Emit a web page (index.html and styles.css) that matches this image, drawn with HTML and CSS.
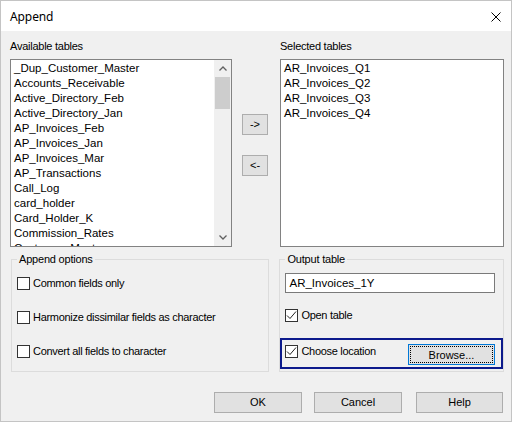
FILE: index.html
```html
<!DOCTYPE html>
<html>
<head>
<meta charset="utf-8">
<link rel="stylesheet" href="styles.css">
</head>
<body>
<div class="window">
  <div class="titlebar">
    <span class="title">Append</span>
    <svg class="close" width="10" height="10" viewBox="0 0 10 10"><path d="M0.5 0.5 L9.5 9.5 M9.5 0.5 L0.5 9.5" stroke="#000" stroke-width="1" fill="none"/></svg>
  </div>
  <div class="content">
    <div class="toprow">
      <div class="col-left">
        <div class="label">Available tables</div>
        <div class="listbox">
          <div class="items">
            <div class="item">_Dup_Customer_Master</div>
            <div class="item">Accounts_Receivable</div>
            <div class="item">Active_Directory_Feb</div>
            <div class="item">Active_Directory_Jan</div>
            <div class="item">AP_Invoices_Feb</div>
            <div class="item">AP_Invoices_Jan</div>
            <div class="item">AP_Invoices_Mar</div>
            <div class="item">AP_Transactions</div>
            <div class="item">Call_Log</div>
            <div class="item">card_holder</div>
            <div class="item">Card_Holder_K</div>
            <div class="item">Commission_Rates</div>
            <div class="item">Customer_Master</div>
          </div>
          <div class="scrollbar">
            <div class="arrow">
              <svg width="8" height="5" viewBox="0 0 8 5"><path d="M0.5 4.5 L4 1 L7.5 4.5" stroke="#606060" stroke-width="1.3" fill="none"/></svg>
            </div>
            <div class="track"><div class="thumb"></div></div>
            <div class="arrow">
              <svg width="8" height="5" viewBox="0 0 8 5"><path d="M0.5 0.5 L4 4 L7.5 0.5" stroke="#606060" stroke-width="1.3" fill="none"/></svg>
            </div>
          </div>
        </div>
      </div>
      <div class="col-mid">
        <button class="btn small">-&gt;</button>
        <button class="btn small">&lt;-</button>
      </div>
      <div class="col-right">
        <div class="label">Selected tables</div>
        <div class="listbox">
          <div class="items">
            <div class="item">AR_Invoices_Q1</div>
            <div class="item">AR_Invoices_Q2</div>
            <div class="item">AR_Invoices_Q3</div>
            <div class="item">AR_Invoices_Q4</div>
          </div>
        </div>
      </div>
    </div>
    <div class="grouprow">
      <fieldset class="group group-left">
        <legend>Append options</legend>
        <div class="checks">
          <label class="check"><span class="box"></span><span>Common fields only</span></label>
          <label class="check"><span class="box"></span><span>Harmonize dissimilar fields as character</span></label>
          <label class="check"><span class="box"></span><span>Convert all fields to character</span></label>
        </div>
      </fieldset>
      <fieldset class="group group-right">
        <legend>Output table</legend>
        <div class="textbox">AR_Invoices_1Y</div>
        <label class="check open"><span class="box"><svg width="11" height="11" viewBox="0 0 11 11"><path d="M1 5.5 L4 8.5 L10 1.5" stroke="#222" stroke-width="1" fill="none"/></svg></span><span>Open table</span></label>
        <div class="focusrect">
          <label class="check loc"><span class="box"><svg width="11" height="11" viewBox="0 0 11 11"><path d="M1 5.5 L4 8.5 L10 1.5" stroke="#222" stroke-width="1" fill="none"/></svg></span><span>Choose location</span></label>
          <button class="btn browse"><span class="dotted">Browse...</span></button>
        </div>
      </fieldset>
    </div>
    <div class="buttons">
      <button class="btn big ok">OK</button>
      <button class="btn big cancel">Cancel</button>
      <button class="btn big help">Help</button>
    </div>
  </div>
</div>
</body>
</html>
```

FILE: styles.css
```css
* { box-sizing: border-box; }
html, body { margin: 0; padding: 0; }
body {
  background: #f0f0f0;
  font-family: "Liberation Sans", Arial, sans-serif;
  font-size: 11px;
  color: #000;
}
.window {
  width: 512px;
  height: 422px;
  border: 1px solid #c4c4c4;
  background: #f0f0f0;
  overflow: hidden;
}
.titlebar {
  height: 30px;
  background: #fff;
  display: flex;
  align-items: center;
  justify-content: space-between;
  padding: 1px 10px 0 9px;
}
.title {
  font-family: "Noto Sans", "Open Sans", sans-serif;
  font-size: 12px;
  letter-spacing: -0.1px;
}
.close { display: block; margin-top: 1px; }
.content {
  padding: 8px 7px 0 9px;
}
.toprow {
  display: flex;
}
.col-left { width: 222px; }
.col-mid {
  width: 48px;
  padding: 75px 0 0 10px;
  display: flex;
  flex-direction: column;
  gap: 20px;
}
.col-right { width: 224px; }
.label {
  height: 14px;
  line-height: 14px;
  margin-bottom: 6px;
  letter-spacing: -0.25px;
}
.listbox {
  height: 188px;
  border: 1px solid #828282;
  background: #fff;
  display: flex;
  overflow: hidden;
}
.items {
  flex: 1;
  padding: 1px 0 0 3px;
  overflow: hidden;
}
.item {
  height: 15px;
  line-height: 15px;
  font-size: 11.5px;
  white-space: nowrap;
}
.scrollbar {
  width: 17px;
  background: #f0f0f0;
  display: flex;
  flex-direction: column;
}
.arrow {
  height: 17px;
  display: flex;
  align-items: center;
  justify-content: center;
}
.arrow svg { display: block; }
.track { flex: 1; }
.thumb {
  height: 32px;
  margin: 0 1px;
  background: #cdcdcd;
}
.btn {
  font-family: "Liberation Sans", Arial, sans-serif;
  font-size: 11px;
  background: #e1e1e1;
  border: 1px solid #adadad;
  padding: 0;
  margin: 0;
  color: #000;
}
.small {
  width: 26px;
  height: 21px;
  line-height: 19px;
}
.grouprow {
  display: flex;
  margin-top: 5px;
}
.group {
  margin: 0;
  padding: 0;
  border: 1px solid #dcdcdc;
  height: 120px;
  min-width: 0;
}
.group legend {
  padding: 0 2px;
  margin-left: 5px;
  line-height: 14px;
  height: 14px;
  font-size: 11px;
  letter-spacing: -0.2px;
}
.group-left {
  width: 259px;
  margin-left: 1px;
}
.group-right {
  width: 225px;
  margin-left: 10px;
}
.checks {
  display: flex;
  flex-direction: column;
  gap: 21px;
  padding: 11px 0 0 5px;
}
.check {
  display: flex;
  align-items: center;
  gap: 3px;
  height: 13px;
  line-height: 13px;
  letter-spacing: -0.3px;
  white-space: nowrap;
}
.box {
  width: 13px;
  height: 13px;
  border: 1px solid #333;
  background: #fff;
  display: flex;
  align-items: center;
  justify-content: center;
  flex: none;
}
.box svg { display: block; }
.textbox {
  margin: 7px 0 0 5px;
  width: 210px;
  height: 20px;
  border: 1px solid #7a7a7a;
  background: #fff;
  line-height: 18px;
  padding-left: 3px;
  font-size: 11.5px;
}
.open {
  margin: 16px 0 0 5px;
}
.focusrect {
  margin-top: 16px;
  height: 31px;
  border: 2px solid #0c1a8c;
  display: flex;
  justify-content: space-between;
  padding: 0 6px 0 3px;
  align-items: center;
}
.loc {
  align-self: flex-start;
  margin-top: 5px;
}
.browse {
  width: 87px;
  height: 21px;
  border: 1px solid #0078d7;
  padding: 1px;
  margin-top: 1px;
}
.dotted {
  display: block;
  height: 17px;
  line-height: 16px;
  border: 1px dotted #000;
  text-align: center;
}
.buttons {
  display: flex;
  justify-content: flex-end;
  margin-top: 20px;
}
.big {
  width: 88px;
  height: 21px;
  line-height: 19px;
}
.ok { margin-right: 12px; }
.cancel { margin-right: 14px; }
.help { width: 87px; margin-right: 1px; }
```
